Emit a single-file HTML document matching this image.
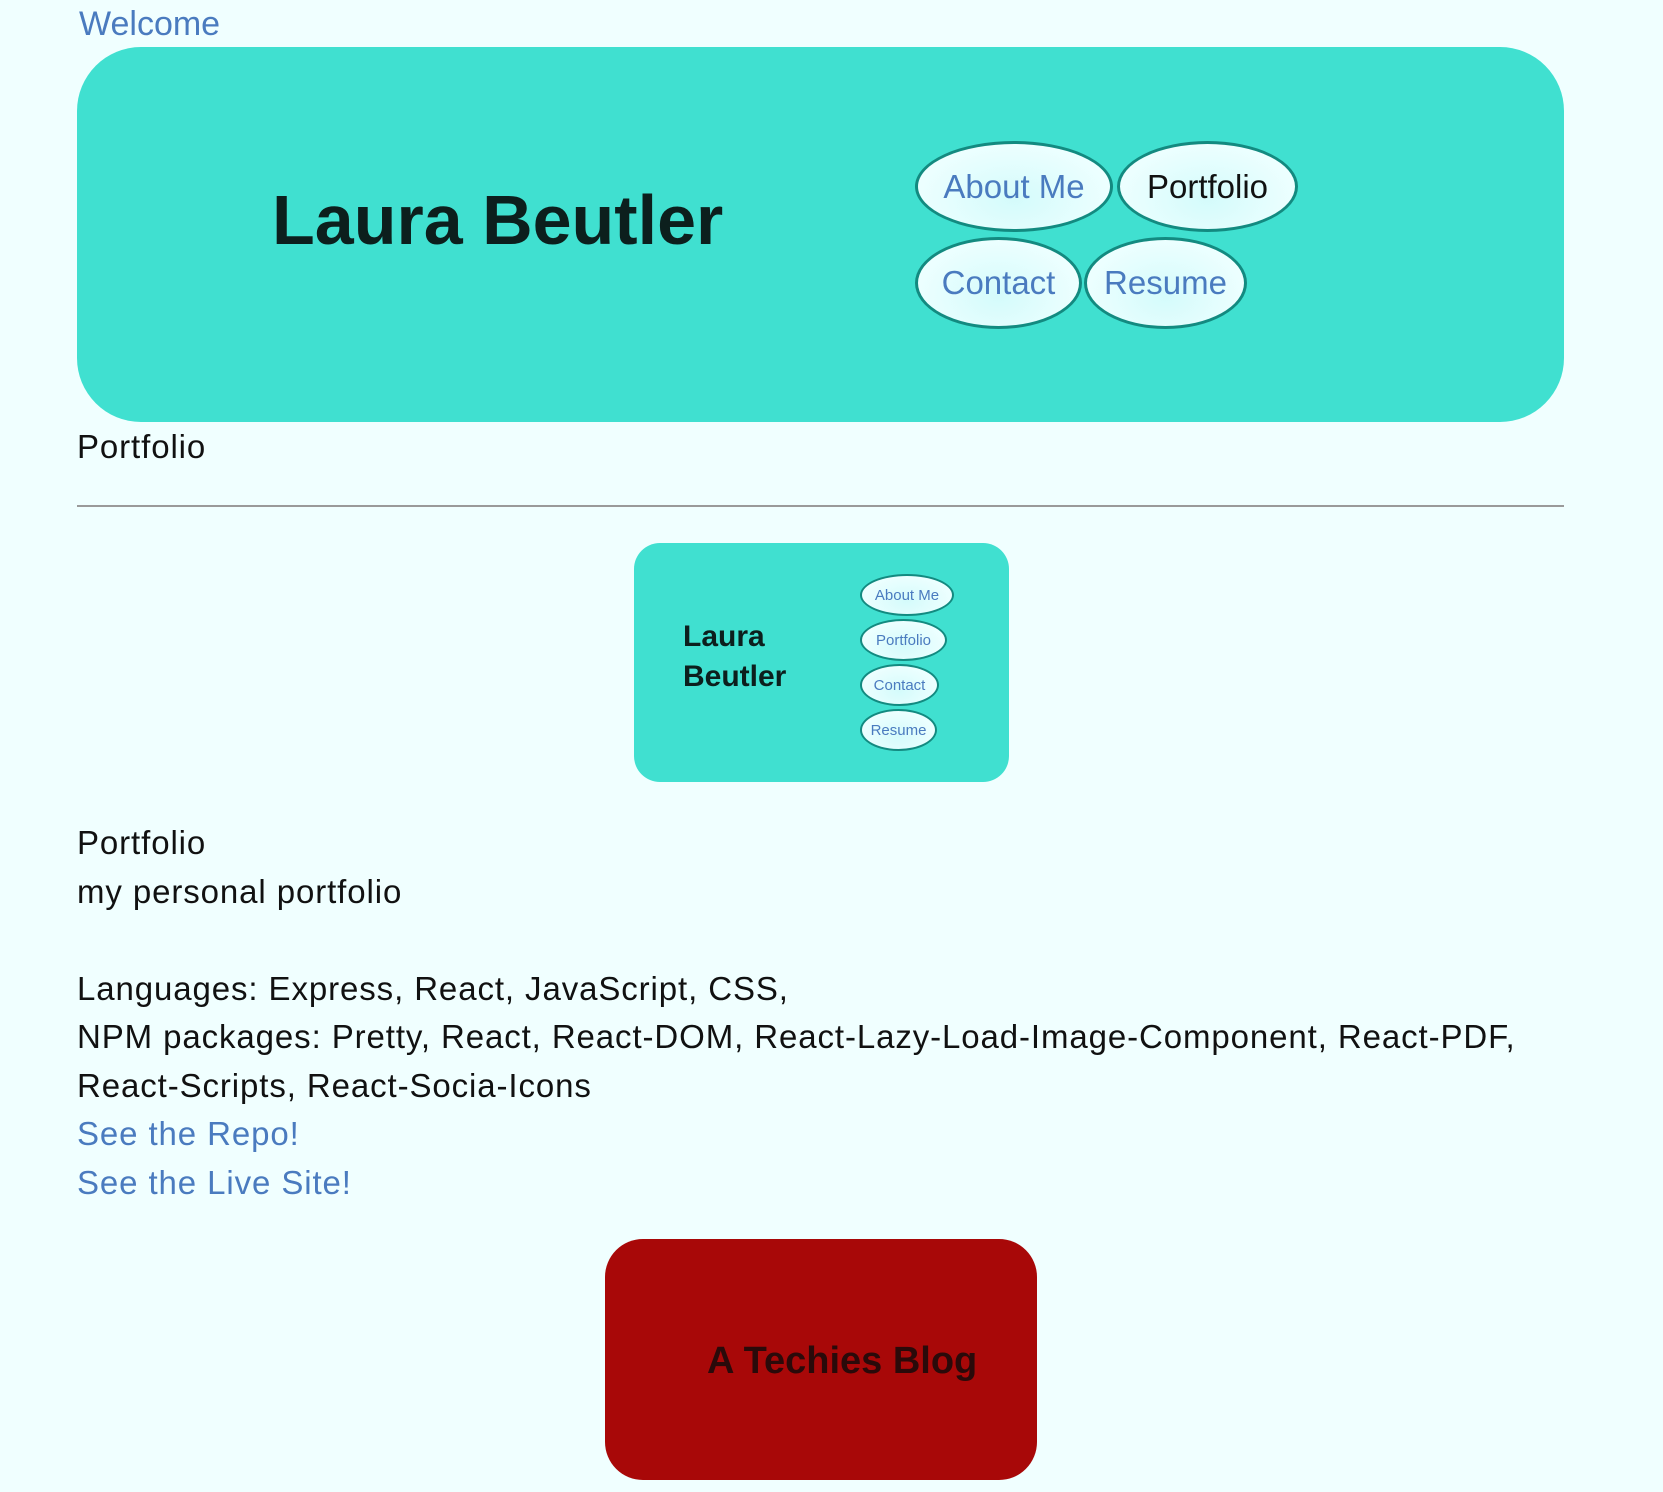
<!DOCTYPE html>
<html><head><meta charset="utf-8"><style>
body{margin:0;width:1663px;height:1492px;background:#f0ffff;position:relative;overflow:hidden;font-family:"Liberation Sans",sans-serif;}
.a{position:absolute;white-space:nowrap;}
.hdr{position:absolute;left:77px;top:47px;width:1487px;height:375px;background:#40e0d0;border-radius:64px;}
.pill{position:absolute;box-sizing:border-box;border:3px solid #138a80;border-radius:50%;background:radial-gradient(ellipse at 50% 65%,#d4fbfb 0%,#ecffff 70%,#f4ffff 100%);display:flex;align-items:center;justify-content:center;font-size:33px;color:#4a7bbf;}
.t{font-size:33px;letter-spacing:0.9px;color:#111;line-height:48.5px;}
.blue{color:#4a7bbf;}
</style></head><body>
<div class="a blue" style="left:79px;top:5px;font-size:34px;">Welcome</div>
<div class="hdr"></div>
<div class="a" style="left:272px;top:180px;font-size:70px;font-weight:bold;color:#0c1f1d;">Laura Beutler</div>
<div class="pill" style="left:915px;top:141px;width:198px;height:91px;">About Me</div>
<div class="pill" style="left:1117px;top:141px;width:181px;height:91px;color:#111;">Portfolio</div>
<div class="pill" style="left:915px;top:237px;width:167px;height:92px;">Contact</div>
<div class="pill" style="left:1084px;top:237px;width:163px;height:92px;">Resume</div>
<div class="a t" style="left:77px;top:423px;">Portfolio</div>
<div class="a" style="left:77px;top:505px;width:1487px;height:2px;background:#9a9a9a;"></div>
<div class="a" style="left:634px;top:543px;width:375px;height:239px;background:#40e0d0;border-radius:26px;"></div>
<div class="a" style="left:683px;top:617px;font-size:30px;font-weight:bold;color:#0c1f1d;line-height:40px;">Laura<br>Beutler</div>
<div class="pill" style="left:860px;top:574px;width:94px;height:42px;font-size:15px;border-width:2px;">About Me</div>
<div class="pill" style="left:860px;top:619px;width:87px;height:42px;font-size:15px;border-width:2px;">Portfolio</div>
<div class="pill" style="left:860px;top:664px;width:79px;height:42px;font-size:15px;border-width:2px;">Contact</div>
<div class="pill" style="left:860px;top:709px;width:77px;height:42px;font-size:15px;border-width:2px;">Resume</div>
<div class="a t" style="left:77px;top:819px;">Portfolio<br>my personal portfolio<br><br>Languages: Express, React, JavaScript, CSS,<br>NPM packages: Pretty, React, React-DOM, React-Lazy-Load-Image-Component, React-PDF,<br>React-Scripts, React-Socia-Icons<br><span class="blue">See the Repo!</span><br><span class="blue">See the Live Site!</span></div>
<div class="a" style="left:605px;top:1239px;width:432px;height:241px;background:#a80808;border-radius:38px;"></div>
<div class="a" style="left:707px;top:1340px;font-size:38px;font-weight:bold;color:#2a0a0a;">A Techies Blog</div>
</body></html>
